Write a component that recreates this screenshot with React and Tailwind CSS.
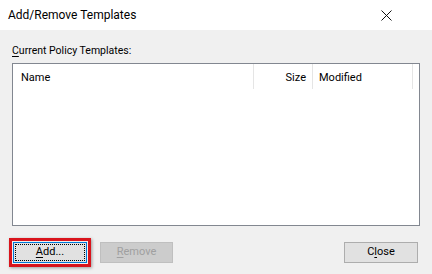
const font = { fontFamily: 'Roboto, "Noto Sans", "Liberation Sans", sans-serif' };

const App = () => {
  return (
    <div
      className="flex h-[274px] w-[432px] flex-col text-[12px] text-black"
      style={font}
    >
      {/* title bar */}
      <div className="flex h-[30px] items-center justify-between bg-white pl-[8px] pr-[40px]">
        <span className="text-[12px] leading-none">Add/Remove Templates</span>
        <svg width="11" height="11" viewBox="0 0 11 11" className="mt-[1px]">
          <path d="M0.5 0.5 L10.5 10.5 M10.5 0.5 L0.5 10.5" stroke="#111" strokeWidth="1" fill="none" />
        </svg>
      </div>

      {/* body */}
      <div className="flex flex-1 flex-col bg-[#f0f0f0] px-[12px]">
        <div className="mt-[14px] h-[19px] text-[10.5px] leading-[14px]">
          <span className="underline underline-offset-2">C</span>urrent Policy Templates:
        </div>

        {/* list view */}
        <div className="flex h-[163px] flex-col border border-[#828790] bg-white">
          <div className="flex h-[25px] items-stretch text-[11px]">
            <div className="flex w-[241px] items-center border-r border-[#e5e5e5] pl-[8px] pt-[3px]">
              Name
            </div>
            <div className="flex w-[59px] items-center justify-end border-r border-[#e5e5e5] pr-[6px] pt-[3px]">
              Size
            </div>
            <div className="flex w-[100px] items-center border-r border-[#e5e5e5] pl-[6px] pt-[3px]">
              Modified
            </div>
          </div>
        </div>

        {/* buttons */}
        <div className="mt-[12px] flex items-center">
          <div className="-ml-[3px] border-[3px] border-[#d9141c] p-[1px] shadow-[1px_1px_3px_rgba(0,0,0,0.35)]">
            <div className="flex h-[21px] w-[74px] items-center justify-center border border-[#0078d7] bg-[#e1e1e1] outline-1 outline-dotted -outline-offset-3 outline-[#000] text-[11px]">
              <span>
                <span className="underline underline-offset-2">A</span>dd...
              </span>
            </div>
          </div>
          <div className="ml-[9px] flex h-[21px] w-[73px] items-center justify-center border border-[#bfbfbf] bg-[#cccccc] text-[11px] text-[#a0a0a0]">
            <span>
              <span className="underline underline-offset-2">R</span>emove
            </span>
          </div>
          <div className="ml-auto mr-[2px] flex h-[21px] w-[74px] items-center justify-center border border-[#adadad] bg-[#e1e1e1] text-[11px]">
            <span>
              C<span className="underline underline-offset-2">l</span>ose
            </span>
          </div>
        </div>
      </div>
    </div>
  );
};

export default App;
